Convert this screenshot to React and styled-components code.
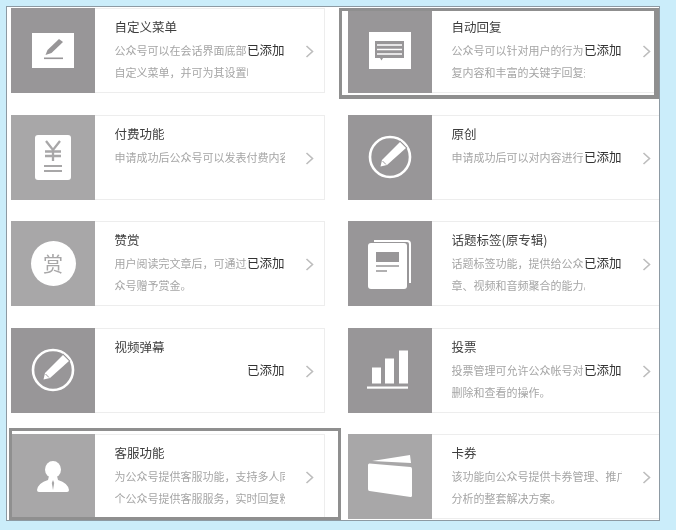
import React from "react";
import styled, { createGlobalStyle } from "styled-components";

const GlobalStyle = createGlobalStyle`
  html, body {
    margin: 0;
    padding: 0;
    height: 100%;
    background: #cbedfa;
    font-family: "Noto Sans CJK SC", "Liberation Sans", sans-serif;
  }
`;

const Frame = styled.div`
  box-sizing: border-box;
  width: 654px;
  height: 515px;
  margin: 6px 0 0 6px;
  padding: 1px 0 0 4px;
  background: #fff;
  border: 1px solid #8d9aa3;
  overflow: hidden;
  display: grid;
  grid-template-columns: 314px 340px;
  grid-auto-rows: 85px;
  column-gap: 23px;
  row-gap: 21.5px;
  filter: blur(0.45px);
`;

const Card = styled.div`
  position: relative;
  display: flex;
  box-sizing: border-box;
  border: 1px solid #ededed;
  background: #fff;

  &::after {
    content: "";
    display: ${(p) => (p.$mark ? "block" : "none")};
    position: absolute;
    box-sizing: border-box;
    border: solid #8f8f8f;
    border-width: ${(p) => (p.$mark === "right" ? "3px 5px 4px 3px" : "3px")};
    left: ${(p) => (p.$mark === "right" ? "-10px" : "-3px")};
    top: ${(p) => (p.$mark === "right" ? "-1px" : "-7px")};
    width: ${(p) => (p.$mark === "right" ? "320px" : "332px")};
    height: ${(p) => (p.$mark === "right" ? "91px" : "92px")};
  }
`;

const IconBox = styled.div`
  flex: none;
  width: 84px;
  margin: -1px 0 -1px -1px;
  background: ${(p) => (p.$light ? "#a8a7a8" : "#989698")};
  display: flex;
  align-items: center;
  justify-content: center;
`;

const Body = styled.div`
  box-sizing: border-box;
  padding: 8px 0 0 19.5px;
  width: ${(p) => (p.$short ? "152.5px" : "189.5px")};
  overflow: hidden;
`;

const Title = styled.div`
  font-size: 12.5px;
  line-height: 20px;
  color: #3d3d3d;
  white-space: nowrap;
`;

const Desc = styled.div`
  margin-top: ${(p) => (p.$first ? "2px" : "0")};
  font-size: 11px;
  line-height: 22px;
  color: #a5a5a5;
  white-space: nowrap;
  overflow: hidden;
`;

const Status = styled.span`
  position: absolute;
  left: 235px;
  top: 31px;
  font-size: 12.5px;
  line-height: 20px;
  color: #333;
  background: #fff;
  white-space: nowrap;
`;

const Arrow = styled.svg`
  position: absolute;
  left: 293px;
  top: 36px;
  width: 9px;
  height: 13px;
`;

const Coin = styled.div`
  width: 45px;
  height: 45px;
  border-radius: 50%;
  background: #fff;
  color: #a8a7a8;
  font-size: 20px;
  line-height: 45px;
  text-align: center;
`;

const PenIcon = () => (
  <svg width="42" height="35" viewBox="0 0 42 35">
    <rect width="42" height="35" fill="#fff" />
    <path d="M13.5 22 L15.5 17 L27 6 L31 9 L19.5 20 Z" fill="#989698" />
    <rect x="12" y="24.5" width="19" height="1.6" fill="#989698" />
  </svg>
);

const ChatIcon = () => (
  <svg width="42" height="37" viewBox="0 0 42 37">
    <rect width="42" height="37" fill="#fff" />
    <path d="M6 9 H35 V26 H14 L12.5 28.5 L11 26 H6 Z" fill="#989698" />
    <path d="M8 13 H33 M8 17.5 H33 M8 22 H33" stroke="#fff" strokeWidth="1.5" />
  </svg>
);

const YenIcon = () => (
  <svg width="36" height="45" viewBox="0 0 36 45">
    <rect width="36" height="45" rx="3" fill="#fff" />
    <path d="M11 6 L18 15 L25 6 M18 15 V26 M10 16.5 H26 M10 21 H26" stroke="#a8a7a8" strokeWidth="2.3" fill="none" />
    <path d="M9 31 H27 M9 36 H27" stroke="#a8a7a8" strokeWidth="2" />
  </svg>
);

const RoundPenIcon = () => (
  <svg width="46" height="46" viewBox="0 0 46 46">
    <circle cx="23" cy="23" r="20" fill="none" stroke="#fff" strokeWidth="2.6" />
    <path
      d="M13.5 32.5 L15 26 L33 8 L39 14 L20 31 Z"
      fill="#fff"
      stroke="#989698"
      strokeWidth="2"
      paintOrder="stroke"
    />
    <path d="M15.5 27 L19 30.5" stroke="#989698" strokeWidth="1" />
  </svg>
);

const RewardIcon = () => <Coin>赏</Coin>;

const AlbumIcon = () => (
  <svg width="44" height="50" viewBox="0 0 44 50">
    <path d="M6 1 H39 Q43 1 43 5 V44 H41 V5 Q41 3 39 3 H6 Z" fill="#fff" />
    <rect x="0" y="4" width="39" height="46" rx="3" fill="#fff" />
    <rect x="8" y="13" width="23" height="10" fill="#989698" />
    <path d="M8 27 H31 M8 32 H19" stroke="#989698" strokeWidth="1.5" />
  </svg>
);

const ChartIcon = () => (
  <svg width="46" height="40" viewBox="0 0 46 40">
    <rect x="5" y="17.5" width="9" height="16" fill="#fff" />
    <rect x="18" y="8.5" width="9" height="25" fill="#fff" />
    <rect x="32" y="0.5" width="9" height="33" fill="#fff" />
    <rect x="0" y="36.5" width="41" height="2.2" fill="#fff" />
  </svg>
);

const PersonIcon = () => (
  <svg width="32" height="32" viewBox="0 0 32 32">
    <ellipse cx="16" cy="8.5" rx="8" ry="8.5" fill="#fff" />
    <path d="M12 15 H20 L21 19 Q31 22 32 29 Q32 31 30 31 H2 Q0 31 0 29 Q1 22 11 19 Z" fill="#fff" />
    <path d="M16 19 L14.8 22 L16 29 L17.2 22 Z" fill="#a8a7a8" />
  </svg>
);

const CardIcon = () => (
  <svg width="44" height="43" viewBox="0 0 44 43">
    <path d="M4 6 L42 0 L43 8 Z" fill="#fff" />
    <path d="M1.5 8.5 L42.5 12 Q44 12.2 44 14 V40.5 Q44 42.2 42.5 42 L1.5 36 Q0 35.8 0 34 V10 Q0 8.4 1.5 8.5 Z" fill="#fff" />
  </svg>
);

const LEFT = [
  { title: "自定义菜单", icon: PenIcon, lines: ["公众号可以在会话界面底部设置", "自定义菜单，并可为其设置响应动作"] },
  { title: "付费功能", icon: YenIcon, light: true, noStatus: true, lines: ["申请成功后公众号可以发表付费内容"] },
  { title: "赞赏", icon: RewardIcon, light: true, lines: ["用户阅读完文章后，可通过微信", "众号赠予赏金。"] },
  { title: "视频弹幕", icon: RoundPenIcon, lines: [] },
  { title: "客服功能", icon: PersonIcon, light: true, noStatus: true, mark: "left", lines: ["为公众号提供客服功能，支持多人同时", "个公众号提供客服服务，实时回复粉丝"] },
];

const RIGHT = [
  { title: "自动回复", icon: ChatIcon, mark: "right", lines: ["公众号可以针对用户的行为提供", "复内容和丰富的关键字回复规则"] },
  { title: "原创", icon: RoundPenIcon, lines: ["申请成功后可以对内容进行原创声明"] },
  { title: "话题标签(原专辑)", icon: AlbumIcon, lines: ["话题标签功能，提供给公众号聚合文", "章、视频和音频聚合的能力。"] },
  { title: "投票", icon: ChartIcon, lines: ["投票管理可允许公众帐号对投票", "删除和查看的操作。"] },
  { title: "卡券", icon: CardIcon, light: true, noStatus: true, lines: ["该功能向公众号提供卡券管理、推广", "分析的整套解决方案。"] },
];

const Plugin = ({ item }) => {
  const Icon = item.icon;
  return (
    <Card $mark={item.mark}>
      <IconBox $light={item.light}>
        <Icon />
      </IconBox>
      <Body $short={!item.noStatus}>
        <Title>{item.title}</Title>
        {item.lines.map((line, i) => (
          <Desc key={line} $first={i === 0}>
            {line}
          </Desc>
        ))}
      </Body>
      {!item.noStatus && <Status>已添加</Status>}
      <Arrow viewBox="0 0 9 13">
        <path d="M1.5 1 L7.5 6.5 L1.5 12" fill="none" stroke="#bdbdbd" strokeWidth="1.6" />
      </Arrow>
    </Card>
  );
};

export default function App() {
  return (
    <>
      <GlobalStyle />
      <Frame>
        {LEFT.map((item, i) => (
          <React.Fragment key={item.title}>
            <Plugin item={item} />
            <Plugin item={RIGHT[i]} />
          </React.Fragment>
        ))}
      </Frame>
    </>
  );
}
